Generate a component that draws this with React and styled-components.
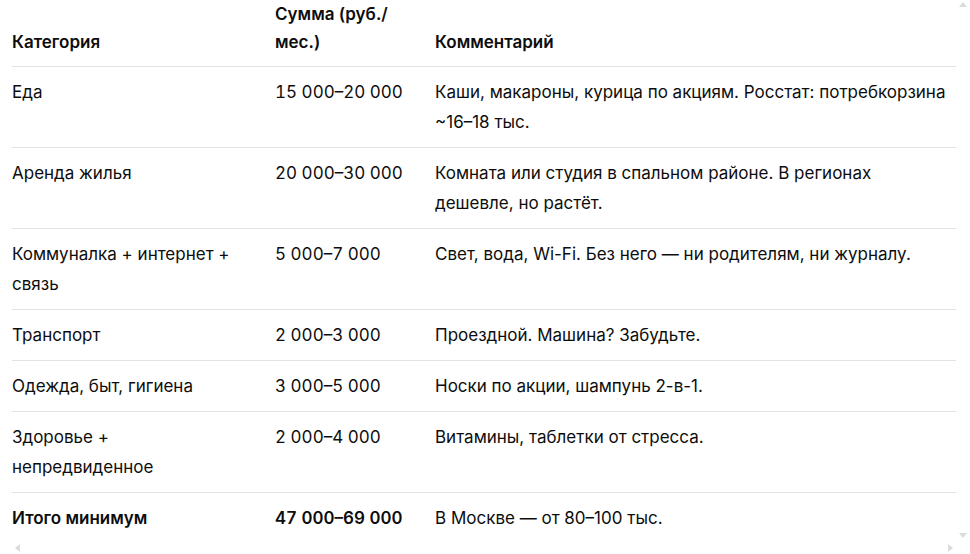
import React from "react";
import styled, { createGlobalStyle } from "styled-components";

const GlobalStyle = createGlobalStyle`
  html, body {
    margin: 0;
    padding: 0;
    background: #ffffff;
  }
  body {
    font-family: Inter, "Noto Sans", "DejaVu Sans", sans-serif;
    color: #0d0d0d;
    -webkit-font-smoothing: antialiased;
  }
`;

const Frame = styled.div`
  position: relative;
  width: 970px;
  height: 554px;
  overflow: hidden;
  background: #fff;
`;

const TableWrap = styled.div`
  padding: 0 14px 0 12px;
`;

const Table = styled.table`
  width: 944px;
  border-collapse: collapse;
  table-layout: fixed;
  font-size: 17px;
`;

const padRight = (p) => (p.$end ? "8px" : p.$first ? "28px" : "16px");

const HeadCell = styled.th`
  text-align: left;
  font-weight: 600;
  line-height: 28px;
  vertical-align: bottom;
  padding: 0 ${padRight} 10px 0;
  border-bottom: 1px solid #e3e3e3;
`;

const Row = styled.tr`
  border-bottom: ${(p) => (p.$last ? "none" : "1px solid #e3e3e3")};
`;

const Cell = styled.td`
  vertical-align: top;
  line-height: 30px;
  padding: 10px ${padRight} 10px 0;
  font-weight: ${(p) => (p.$bold ? 600 : 400)};
  font-variant-numeric: ${(p) => (p.$num ? "tabular-nums" : "normal")};
`;

const Arrow = styled.span`
  position: absolute;
  width: 0;
  height: 0;
  border-style: solid;
  border-color: transparent;
  ${(p) => p.$dir === "up" && `
    top: 2px; right: 3px;
    border-width: 0 4px 5px 4px;
    border-bottom-color: #dcdcdc;
  `}
  ${(p) => p.$dir === "down" && `
    top: 533px; right: 3px;
    border-width: 5px 4px 0 4px;
    border-top-color: #dcdcdc;
  `}
  ${(p) => p.$dir === "left" && `
    top: 544px; left: 15px;
    border-width: 4px 5px 4px 0;
    border-right-color: #dcdcdc;
  `}
  ${(p) => p.$dir === "right" && `
    top: 544px; right: 17px;
    border-width: 4px 0 4px 5px;
    border-left-color: #dcdcdc;
  `}
`;

const rows = [
  ["Еда", "15 000–20 000", "Каши, макароны, курица по акциям. Росстат: потребкорзина ~16–18 тыс."],
  ["Аренда жилья", "20 000–30 000", "Комната или студия в спальном районе. В регионах дешевле, но растёт."],
  ["Коммуналка + интернет + связь", "5 000–7 000", "Свет, вода, Wi-Fi. Без него — ни родителям, ни журналу."],
  ["Транспорт", "2 000–3 000", "Проездной. Машина? Забудьте."],
  ["Одежда, быт, гигиена", "3 000–5 000", "Носки по акции, шампунь 2-в-1."],
  ["Здоровье + непредвиденное", "2 000–4 000", "Витамины, таблетки от стресса."],
];

export default function App() {
  return (
    <Frame>
      <GlobalStyle />
      <TableWrap>
        <Table>
          <colgroup>
            <col style={{ width: 263 }} />
            <col style={{ width: 160 }} />
            <col />
          </colgroup>
          <thead>
            <tr>
              <HeadCell $first>Категория</HeadCell>
              <HeadCell>Сумма (руб./ мес.)</HeadCell>
              <HeadCell $end>Комментарий</HeadCell>
            </tr>
          </thead>
          <tbody>
            {rows.map(([cat, sum, note]) => (
              <Row key={cat}>
                <Cell $first>{cat}</Cell>
                <Cell $num>{sum}</Cell>
                <Cell $end>{note}</Cell>
              </Row>
            ))}
            <Row $last>
              <Cell $first $bold>Итого минимум</Cell>
              <Cell $num $bold>47 000–69 000</Cell>
              <Cell $end>В Москве — от 80–100 тыс.</Cell>
            </Row>
          </tbody>
        </Table>
      </TableWrap>
      <Arrow $dir="up" />
      <Arrow $dir="down" />
      <Arrow $dir="left" />
      <Arrow $dir="right" />
    </Frame>
  );
}
